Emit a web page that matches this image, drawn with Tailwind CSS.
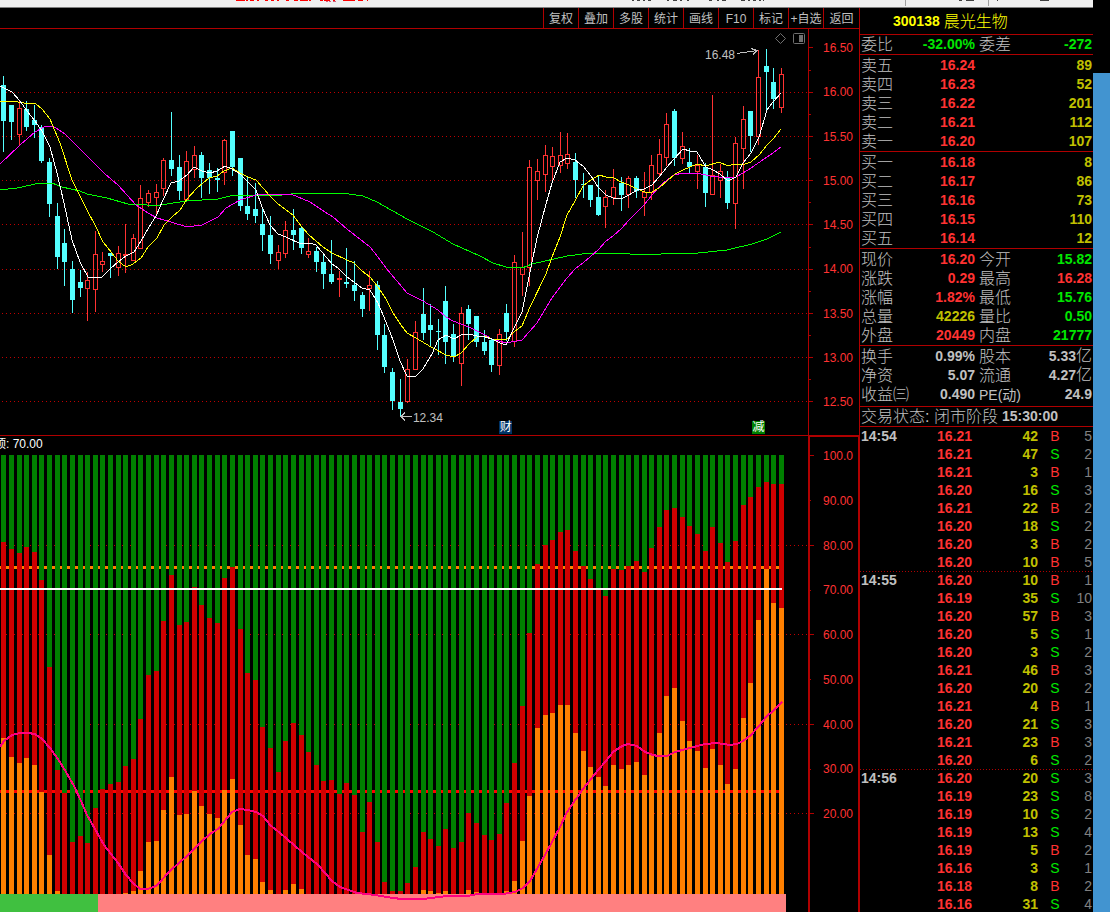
<!DOCTYPE html>
<html lang="zh-CN">
<head>
<meta charset="utf-8">
<meta name="viewport" content="width=device-width, initial-scale=1">
<title>300138 晨光生物</title>
<script src="https://cdn.jsdelivr.net/npm/@tailwindcss/browser@4"></script>
</head>
<body class="h-screen overflow-hidden bg-black font-['Liberation_Sans','Noto_Sans_CJK_SC',sans-serif] text-[#c0c0c0]">
<div class="flex h-full">
  <div class="flex min-w-0 flex-1 flex-col">
    <!-- lower edge of the window title bar -->
    <div class="h-2 shrink-0 border-b border-[#808080] bg-[#f0f0f0]">
      <svg class="block h-[7px] w-full" viewBox="0 0 1093 7" preserveAspectRatio="none" shape-rendering="crispEdges" aria-hidden="true">
        <path stroke="#ff0000" stroke-width="1" d="M236 .5h9m1 0h2m2 0h4m3 0h2m6 0h3m3 0h3m3 0h2m7 0h3m5 0h4m2 0h8m1 0h2m9 0h3m1 0h6m3 0h2m8 0h12m3 0h5m4 0h1"/>
        <path stroke="#d06080" stroke-width="1" d="M326 1.5h2m1 0h2m2 0h3"/>
        <path stroke="#404040" stroke-width="1" d="M632 .5h2m3 0h3m3 0h2m3 0h3m16 0h2m4 0h4m3 0h2m5 0h2m20 0h3m5 0h2m3 0h4m15 0h4m3 0h2m3 0h3m3 0h2m2 0h1m195 0h3m4 0h8m23 0h1m42 0h9"/>
        <path stroke="#a0a0a0" d="M905.5 0v6M988.5 0v6"/>
      </svg>
    </div>
    <div class="flex min-h-0 flex-1">
      <main class="flex min-w-0 flex-1 flex-col">
        <nav aria-label="图表工具" class="flex h-[21px] shrink-0 justify-end border-b border-[#b00000] text-xs leading-[22px]">
          <button class="w-[35px] border-l border-[#b00000]">复权</button>
          <button class="w-[35px] border-l border-[#b00000]">叠加</button>
          <button class="w-[35px] border-l border-[#b00000]">多股</button>
          <button class="w-[35px] border-l border-[#b00000]">统计</button>
          <button class="w-[35px] border-l border-[#b00000]">画线</button>
          <button class="w-[35px] border-l border-[#b00000]">F10</button>
          <button class="w-[35px] border-l border-[#b00000]">标记</button>
          <button class="w-[35px] border-l border-[#b00000] whitespace-nowrap">+自选</button>
          <button class="w-9 border-l border-[#b00000]">返回</button>
        </nav>

        <section aria-label="K线图" class="min-h-0 flex-[407]">
          <div class="flex h-full border-b border-[#b00000]">
            <div class="relative min-w-0 flex-1">
              <svg id="price" class="absolute block h-full w-full" viewBox="0 29 808 406" preserveAspectRatio="none" shape-rendering="crispEdges" role="img" aria-label="日K线与均线"></svg>
              <span class="absolute top-[18px] right-[73px] text-xs leading-4">16.48</span>
              <span class="absolute top-[381px] left-[51.1%] text-xs leading-4">12.34</span>
              <span class="absolute top-[392px] left-[61.8%] size-[13px] bg-[#003366] text-center text-xs leading-[13px] text-white">财</span>
              <span class="absolute top-[392px] right-[43px] size-[13px] bg-[#008000] text-center text-xs leading-[13px] text-white">减</span>
              <button aria-label="标注" class="absolute top-1 right-[22px]">
                <svg class="block size-[11px]" viewBox="0 0 11 11" fill="none" stroke="#707070"><path d="M5.5.5l5 5-5 5-5-5z"/></svg>
              </button>
              <button aria-label="侧栏" class="absolute top-1 right-[3px]">
                <svg class="block h-[11px] w-3" viewBox="0 0 12 11"><rect x=".5" y=".5" width="11" height="10" rx="1" fill="none" stroke="#707070"/><path fill="#707070" d="M6 2h4v7H6z"/></svg>
              </button>
            </div>
            <div class="relative w-[51px] border-l border-[#b00000]">
              <svg id="priceTicks" class="absolute block h-full w-2" viewBox="809 29 8 406" preserveAspectRatio="none" shape-rendering="crispEdges" aria-hidden="true"></svg>
              <div class="flex h-full flex-col justify-between pt-[11px] pr-1.5 pb-[25px] text-right text-xs leading-4 text-[#ff3232]">
                <span>16.50</span><span>16.00</span><span>15.50</span><span>15.00</span><span>14.50</span><span>14.00</span><span>13.50</span><span>13.00</span><span>12.50</span>
              </div>
            </div>
          </div>
        </section>

        <section aria-label="指标图" class="min-h-0 flex-[476]">
          <div class="flex h-full">
            <div class="relative min-w-0 flex-1 overflow-hidden">
              <svg id="osc" class="absolute block h-full w-full" viewBox="0 436 808 476" preserveAspectRatio="none" shape-rendering="crispEdges" role="img" aria-label="指标柱状图"></svg>
              <p class="-ml-1.5 text-xs leading-4 text-white">顶: 70.00</p>
            </div>
            <div class="relative w-[51px] border-t border-r border-l-2 border-[#b00000]">
              <svg id="oscTicks" class="absolute block h-full w-2" viewBox="810 437 8 475" preserveAspectRatio="none" shape-rendering="crispEdges" aria-hidden="true"></svg>
              <div class="flex h-full flex-col justify-between pt-[11px] pr-[5px] pb-[90px] text-right text-xs leading-4 text-[#ff3232]">
                <span>100.0</span><span>90.00</span><span>80.00</span><span>70.00</span><span>60.00</span><span>50.00</span><span>40.00</span><span>30.00</span><span>20.00</span>
              </div>
            </div>
          </div>
        </section>
      </main>

      <aside class="w-[234px] shrink-0 overflow-hidden border-l border-[#b00000] text-sm leading-[19px] font-bold">
        <h1 class="flex h-[27px] items-center gap-1 border-b border-[#b00000] pt-px pl-[33px] text-[#ffff00]"><span>300138</span><span class="text-base font-light">晨光生物</span></h1>
        <div id="book"></div>
        <p class="flex h-5 items-center gap-1 border-b border-[#b00000] pl-px"><span class="text-base font-light">交易状态: 闭市阶段</span><span>15:30:00</span></p>
        <table class="w-full table-fixed">
          <colgroup><col class="w-[50px]"><col class="w-[62px]"><col class="w-[66px]"><col class="w-[34px]"><col></colgroup>
          <tbody id="ticks"></tbody>
        </table>
      </aside>
    </div>
  </div>
  <div class="w-[17px] shrink-0 pt-[73px]"><div class="h-full bg-[#4294d0]"></div></div>
</div>

<script>
const RED = 'text-[#ff3232]', GREEN = 'text-[#00e600]', YELLOW = 'text-[#c0c000]', GREY = 'text-[#c0c0c0]';
const range = (a, b) => Array.from({ length: b - a }, (_, i) => a + i);

/* ---------- quote panel ---------- */
const blocks = [
  { pad: 'h-[19px]', rows: [['委比', '-32.00%', GREEN, '委差', '-272', GREEN]] },
  { pad: 'pt-px', rows: [['卖五', '16.24', RED, '', '89', YELLOW], ['卖四', '16.23', RED, '', '52', YELLOW], ['卖三', '16.22', RED, '', '201', YELLOW], ['卖二', '16.21', RED, '', '112', YELLOW], ['卖一', '16.20', RED, '', '107', YELLOW]] },
  { pad: 'pt-px', rows: [['买一', '16.18', RED, '', '8', YELLOW], ['买二', '16.17', RED, '', '86', YELLOW], ['买三', '16.16', RED, '', '73', YELLOW], ['买四', '16.15', RED, '', '110', YELLOW], ['买五', '16.14', RED, '', '12', YELLOW]] },
  { pad: 'pt-px', rows: [['现价', '16.20', RED, '今开', '15.82', GREEN], ['涨跌', '0.29', RED, '最高', '16.28', RED], ['涨幅', '1.82%', RED, '最低', '15.76', GREEN], ['总量', '42226', YELLOW, '量比', '0.50', GREEN], ['外盘', '20449', RED, '内盘', '21777', GREEN]] },
  { pad: 'pt-px pb-0.5', rows: [['换手', '0.99%', GREY, '股本', '5.33亿', GREY], ['净资', '5.07', GREY, '流通', '4.27亿', GREY], ['收益㈢', '0.490', GREY, '<span class="text-sm leading-none font-normal">PE(动)</span>', '24.9', GREY]] },
];
const num = s => s.replace('亿', '<span class="text-base leading-none font-light">亿</span>');
document.getElementById('book').innerHTML = blocks.map(b => `
  <div class="${b.pad} box-content border-b border-[#b00000]"><table class="w-full table-fixed">
  <colgroup><col class="w-[50px]"><col class="w-[65px]"><col class="w-[53px]"><col></colgroup><tbody>${b.rows.map(r => `
  <tr class="h-[19px]"><th scope="row" class="p-0 pl-px text-left align-middle text-base leading-[19px] font-light whitespace-nowrap">${r[0]}</th>
  <td class="p-0 text-right align-middle ${r[2]}">${r[1]}</td>
  <th scope="row" class="p-0 pl-1 text-left align-middle text-base leading-[19px] font-light whitespace-nowrap">${r[3]}</th>
  <td class="p-0 pr-px text-right align-middle whitespace-nowrap ${r[5]}">${num(r[4])}</td></tr>`).join('')}
  </tbody></table></div>`).join('');

const deals = `14:54 16.21 42 B 5|- 16.21 47 S 2|- 16.21 3 B 1|- 16.20 16 S 3|- 16.21 22 B 2|- 16.20 18 S 2|- 16.20 3 B 2|- 16.20 10 B 5|14:55 16.20 10 B 1|- 16.19 35 S 10|- 16.20 57 B 3|- 16.20 5 S 1|- 16.20 3 S 2|- 16.21 46 B 3|- 16.20 20 S 2|- 16.21 4 B 1|- 16.20 21 S 3|- 16.21 23 B 3|- 16.20 6 S 2|14:56 16.20 20 S 3|- 16.19 23 S 8|- 16.19 10 S 2|- 16.19 13 S 4|- 16.19 5 B 2|- 16.16 3 S 1|- 16.18 8 B 2|- 16.16 31 S 4`
  .split('|').map(s => s.split(' '));
document.getElementById('ticks').innerHTML = deals.map(([t, p, v, side, n], i) => `
  <tr class="h-[18px] leading-[18px] ${t !== '-' && i ? 'bg-[repeating-linear-gradient(90deg,#b00000_0_1px,transparent_1px_3px)] bg-[length:100%_1px] bg-no-repeat' : ''}">
  <td class="p-0 pl-px">${t === '-' ? '' : t}</td><td class="p-0 text-right ${RED}">${p}</td><td class="p-0 text-right ${YELLOW}">${v}</td>
  <td class="p-0 text-center font-normal ${side === 'B' ? RED : GREEN}">${side}</td><td class="p-0 pr-px text-right font-normal text-[#808080]">${n}</td></tr>`).join('');

/* ---------- charts ---------- */
const X = [1,9,17,24,32,39,47,55,62,70,78,85,93,100,108,116,123,131,138,146,154,161,169,177,184,192,199,207,215,222,230,238,245,253,260,268,276,283,291,299,306,314,321,329,337,344,352,360,367,375,382,390,398,405,413,421,428,436,443,451,459,466,474,482,489,497,504,512,520,527,535,543,550,558,565,573,581,588,596,603,611,619,626,634,642,649,657,664,672,680,687,695,703,710,718,725,733,741,748,756,764,771,779];
/* each candle: u = hollow, d = filled; then high, body top, body bottom, low */
const K = `d76,85,121,152 d105,105,122,140 u100,108,135,145 d101,109,127,131 d105,120,125,138 d125,127,161,163 d158,162,204,217 d203,216,257,269 d229,243,262,286 d261,269,300,313 d270,282,288,297 u272,280,289,321 u231,254,290,312 u252,261,265,272 d253,253,256,278 u246,253,268,276 u224,254,256,273 u234,238,261,261 u185,198,249,249 u190,193,203,207 u184,192,198,215 u158,160,189,196 d112,160,169,176 d155,167,191,200 u151,161,200,200 u146,155,170,178 d152,155,178,198 d163,170,178,194 d168,178,180,192 u139,140,173,185 d131,131,167,176 d158,158,206,211 d176,206,214,220 d183,209,216,223 d208,224,235,251 d216,235,254,264 u245,252,261,269 u221,230,254,258 d209,230,235,250 d226,228,248,254 u238,251,255,258 d247,251,262,272 d254,262,274,289 d240,274,282,284 u271,278,280,297 d248,282,284,288 d261,285,291,301 d292,295,309,317 u271,285,289,311 d281,285,335,350 d324,335,367,373 d368,372,401,410 d379,402,409,417 u359,369,402,403 u321,332,370,370 d288,314,333,340 d304,325,330,347 d319,331,332,355 d286,301,342,364 d324,334,357,362 u307,313,364,386 d305,309,324,340 d316,316,342,347 d330,342,351,355 d339,340,365,372 u329,334,366,375 d304,313,332,341 u255,262,342,347 u232,267,275,296 u160,167,268,286 u159,171,181,200 u145,155,175,192 u147,156,167,182 u132,155,166,173 u133,154,164,169 d153,162,180,198 d173,184,185,198 d185,185,200,207 d176,197,215,216 u190,197,207,228 u169,187,198,205 d177,183,195,211 u176,178,195,208 d176,178,191,198 u172,192,198,216 u155,165,193,200 u139,154,174,177 u113,124,158,166 d109,111,158,166 u132,146,159,164 d148,162,167,173 u155,165,172,189 d163,167,193,207 u95,175,195,195 u164,171,181,198 d171,177,203,209 u137,143,204,229 u106,119,149,189 d111,111,136,152 u50,77,137,145 d49,66,72,110 d68,82,99,109 u68,74,108,113`.split(' ');
const grid = (ys) => ys.map(y => `<path d="M2 ${y}.5H808" stroke="#c00000" stroke-dasharray="1 3"/>`).join('');
const line = (pts, c, w) => `<polyline fill="none" stroke="${c}" stroke-width="${w}" points="${pts}"/>`;

const white = '0,86 4,88 12,92 20,101 27,111 35,121 42,131 50,147 57,173 64,203 72,240 80,262 88,277 102,277 110,269 118,262 126,256 134,252 141,241 149,227 156,216 163,200 171,183 179,181 187,175 194,167 202,171 210,173 217,171 225,166 232,169 240,174 248,182 256,190 262,207 270,225 278,234 286,237 301,244 310,243 316,245 332,264 338,268 347,277 362,288 370,290 378,303 386,322 393,340 400,361 407,376 416,376 423,369 432,354 438,340 446,335 454,339 461,335 469,334 477,336 485,337 492,339 500,343 506,345 514,328 522,312 530,272 537,238 546,204 552,183 560,162 567,158 575,160 583,166 591,176 598,187 606,195 613,198 621,199 629,195 637,190 644,189 652,185 659,177 667,167 674,159 683,149 690,151 697,152 706,167 713,170 720,174 728,181 736,177 743,163 751,153 759,137 767,110 773,102 781,93';
const yellow = '0,102 12,101 24,103 35,103 42,109 50,119 60,143 72,180 87,210 96,227 103,242 112,253 118,261 126,267 133,264 141,258 148,247 157,238 164,225 172,217 180,210 187,199 197,188 203,183 209,178 217,176 224,171 232,168 240,173 248,177 256,180 263,188 270,196 278,204 293,215 302,227 309,235 323,247 332,253 347,260 354,263 362,271 370,277 378,287 386,299 393,313 401,325 407,333 416,338 431,347 446,355 454,357 461,353 469,344 477,337 485,336 492,339 507,339 514,332 522,326 530,307 546,274 552,257 560,237 567,215 575,201 583,186 591,180 599,175 606,177 614,178 621,182 629,185 637,189 645,192 652,192 659,188 667,181 675,174 683,170 697,164 706,166 719,162 728,166 735,164 745,164 751,162 759,155 767,145 773,139 781,129';
const magenta = '0,164 20,145 35,132 44,127 50,126 56,128 65,134 105,174 118,185 136,205 148,213 157,218 171,222 187,227 202,225 218,217 226,208 240,200 259,194 291,194 310,202 325,212 333,217 347,229 370,247 378,257 386,268 407,293 423,301 438,310 446,317 453,321 469,327 483,334 492,339 506,343 522,340 537,323 552,298 567,278 575,269 583,263 598,250 606,241 613,236 621,229 629,220 644,205 652,195 659,187 667,180 674,175 683,173 697,173 710,176 728,178 736,177 743,173 751,168 767,157 773,153 781,147';
const green = '0,190 17,188 40,183 52,183 62,187 80,191 87,194 107,198 128,204 147,205 160,205 187,201 218,199 230,196 247,195 267,195 282,195 300,193 342,193 363,196 377,202 407,219 433,232 453,244 480,256 493,263 506,267 522,268 532,264 567,256 590,253 613,253 647,255 675,253 698,253 727,250 752,244 767,239 781,232';

document.getElementById('price').innerHTML = grid([92,136,180,224,269,313,357,401]) + K.map((s, i) => {
  const [h, t, b, l] = s.slice(1).split(',').map(Number), x = X[i];
  if (s[0] === 'd') return `<path fill="#54ffff" d="M${x + 2} ${h}h1V${l}h-1zM${x} ${t}h5V${b}h-5z"/>`;
  return `<path fill="#ff3232" fill-rule="evenodd" d="M${x + 2} ${h}h1V${t}h-1zM${x + 2} ${b}h1V${l}h-1zM${x} ${t}h5V${b}h-5z${b - t > 2 ? `M${x + 1} ${t + 1}h3V${b - 1}h-3z` : ''}"/>`;
}).join('') + line(green, '#00ff00', 1) + line(magenta, '#ff00ff', 1) + line(yellow, '#ffff00', 1) + line(white, '#ffffff', 1)
  + '<path fill="none" stroke="#c0c0c0" d="M737 53.5L757 50.5M751 48.5L757 50.5L753 54.5M412 416.5H401M405 412.5L401 416.5L405 420.5"/>';

document.getElementById('priceTicks').innerHTML = [47,92,136,180,224,269,313,357,401].map(y => `<path stroke="#b00000" d="M809 ${y}.5h4"/>`).join('')
  + [70,114,158,202,247,291,335,379].map(y => `<path stroke="#b00000" d="M809 ${y}.5h2"/>`).join('');

const R = [542,549,553,547,552,580,667,770,793,842,836,843,808,789,784,782,766,759,719,675,671,621,575,625,622,587,605,618,623,578,567,629,673,680,727,748,772,741,723,735,752,765,781,780,794,783,795,832,802,842,882,891,891,883,867,832,839,846,829,848,842,813,823,835,840,834,803,763,706,633,564,545,540,532,530,551,566,579,589,596,569,570,566,561,572,548,527,510,508,517,526,534,551,527,543,562,541,505,497,487,482,484,484];
const O = [738,757,763,758,765,792,855,891,...range(0, 8).map(() => 894),893,891,871,842,841,810,777,815,814,791,806,814,818,790,779,825,855,859,882,890,894,890,884,889,...range(0, 15).map(() => 894),890,891,893,891,894,894,890,892,894,894,894,891,881,841,796,728,715,713,705,705,733,751,767,777,786,765,769,765,762,775,755,733,696,688,721,741,751,768,749,765,784,769,718,683,620,569,603,608];
const signal = '0,747 4,741 12,735 20,733 28,733 35,734 42,739 50,748 58,759 66,772 74,786 81,801 87,815 95,829 104,845 118,863 126,875 133,883 140,889 148,889 156,886 171,870 187,856 202,841 210,834 218,829 232,812 240,809 248,810 256,812 263,816 270,825 280,833 302,852 318,865 332,881 340,887 357,893 375,895 393,898 402,899 423,899 447,896 467,896 478,894 503,894 515,892 523,888 530,881 538,867 545,855 552,842 560,827 567,812 576,799 583,789 591,779 598,770 606,761 613,752 622,746 628,744 637,746 645,752 653,755 658,756 667,756 675,752 690,748 705,744 717,743 730,745 737,744 743,741 751,735 758,727 767,716 773,711 782,702';
document.getElementById('osc').innerHTML = grid([545,634,724,813])
  + '<path stroke="#ff8000" stroke-width="3" d="M0 567.5H780"/><path stroke="#ff0000" stroke-width="3" d="M0 791.5H780"/>'
  + X.map((x, i) => `<path fill="#008000" d="M${x} 455h5V${R[i]}h-5z"/><path fill="#d00000" d="M${x} ${R[i]}h5V${O[i]}h-5z"/><path fill="#ff8000" d="M${x} ${O[i]}h5V894h-5z"/>`).join('')
  + '<path fill="#40c040" d="M0 894h98v18H0z"/><path fill="#ff8080" d="M98 894h688v18H98z"/>'
  + line(signal, '#ff0080', 2) + '<path stroke="#ffffff" stroke-width="2" d="M0 589H782"/>';
document.getElementById('oscTicks').innerHTML = [455,545,634,724,813].map(y => `<path stroke="#b00000" d="M810 ${y}.5h4"/>`).join('')
  + [500,590,679,769].map(y => `<path stroke="#b00000" d="M810 ${y}.5h1"/>`).join('');
</script>
</body>
</html>
